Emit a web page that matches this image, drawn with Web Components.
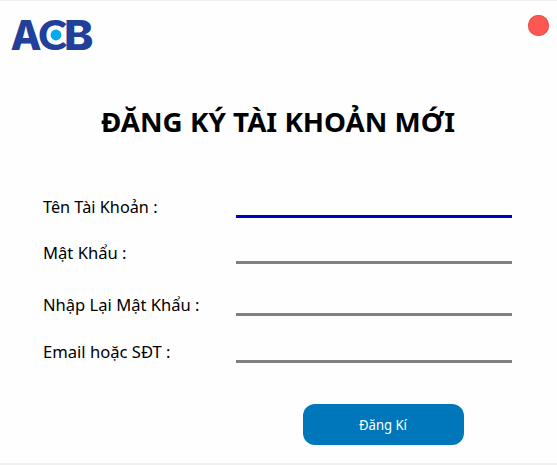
<!DOCTYPE html>
<html lang="vi">
<head>
<meta charset="utf-8">
<title>Đăng ký</title>
<style>
html,body{margin:0;height:100%;background:#fefefe}
body{font-family:"Noto Sans","Open Sans",sans-serif;color:#000;overflow:hidden}
</style>
</head>
<body>
<signup-window></signup-window>
<script>
const define=(name,html,init)=>customElements.define(name,class extends HTMLElement{
  connectedCallback(){
    if(this.shadowRoot)return;
    this.attachShadow({mode:'open'}).innerHTML=html;
    if(init)init.call(this,this.shadowRoot);
  }
});

/* Single line of text set to a given width */
define('fit-text',`<style>
:host{display:block;white-space:nowrap}
span{display:inline-block;transform-origin:0 50%}
</style><span><slot></slot></span>`,function(root){
  const s=root.querySelector('span');
  const w=+this.getAttribute('width');
  this.style.width=w+'px';
  s.style.transform=`scaleX(${w/s.getBoundingClientRect().width})`;
});

define('acb-logo',`<style>
:host{display:block;width:84px;height:34px}
svg{display:block;overflow:visible}
text{font-family:Inter,"Open Sans",sans-serif;font-weight:800;font-size:41px;fill:#20409b}
.c{font-family:Lato,Inter,sans-serif;font-weight:900;font-size:42.5px}
</style>
<svg width="84" height="34" viewBox="10 18 84 34">
<text x="10.5" y="50" textLength="31" lengthAdjust="spacingAndGlyphs">A</text>
<text class="c" x="38" y="50.3" textLength="29" lengthAdjust="spacingAndGlyphs" stroke="#fefefe" stroke-width="2" paint-order="stroke">C</text>
<text x="64" y="50" textLength="29.5" lengthAdjust="spacingAndGlyphs">B</text>
<circle cx="56" cy="35" r="6.4" fill="#fefefe"/>
<circle cx="56" cy="35" r="5.4" fill="#06a9ee"/>
</svg>`);

define('close-dot',`<style>
:host{display:block;width:21px;height:21px;border-radius:50%;background:#fc5753;box-shadow:inset 0 0 0 1px #ee504c}
</style>`);

define('form-field',`<style>
:host{display:grid;grid-template:24px / 193px 276px;height:24px;font-size:16px;line-height:26px}
.line{border-bottom:3px solid #808080}
:host([active]) .line{border-color:#0000c8}
</style><div><slot></slot></div><div class="line"></div>`);

define('submit-button',`<style>
:host{display:flex;justify-content:center;align-items:center;box-sizing:border-box;padding-right:2px;width:161px;height:41px;border-radius:12px;background:#0077bb;color:#fff;font-size:14px;line-height:20px}
</style><slot></slot>`);

define('signup-window',`<style>
:host{display:flex;flex-direction:column;height:465px;width:557px;box-sizing:border-box;border-top:1px solid #efefef;border-bottom:2px solid #f0f0f0;background:#fefefe}
header{display:flex;justify-content:space-between;align-items:flex-start;padding:14px 8px 0 10px;height:65px}
acb-logo{margin-top:3px}
h1{margin:22px 0 0 100.5px;font-size:27.5px;line-height:40px;font-weight:700}
form{display:flex;flex-direction:column;padding-left:43px;margin-top:52px}
form-field:nth-child(2){margin-top:22px}
form-field:nth-child(3){margin-top:28px}
form-field:nth-child(4){margin-top:23px}
submit-button{margin:41px 0 0 303px}
</style>
<header><acb-logo></acb-logo><close-dot></close-dot></header>
<h1><fit-text width="354">ĐĂNG KÝ TÀI KHOẢN MỚI</fit-text></h1>
<form>
<form-field active><fit-text width="114.5">Tên Tài Khoản :</fit-text></form-field>
<form-field><fit-text width="83.5">Mật Khẩu :</fit-text></form-field>
<form-field><fit-text width="156.5">Nhập Lại Mật Khẩu :</fit-text></form-field>
<form-field><fit-text width="127.5">Email hoặc SĐT :</fit-text></form-field>
</form>
<submit-button><fit-text width="48">Đăng Kí</fit-text></submit-button>`);
</script>
</body>
</html>
